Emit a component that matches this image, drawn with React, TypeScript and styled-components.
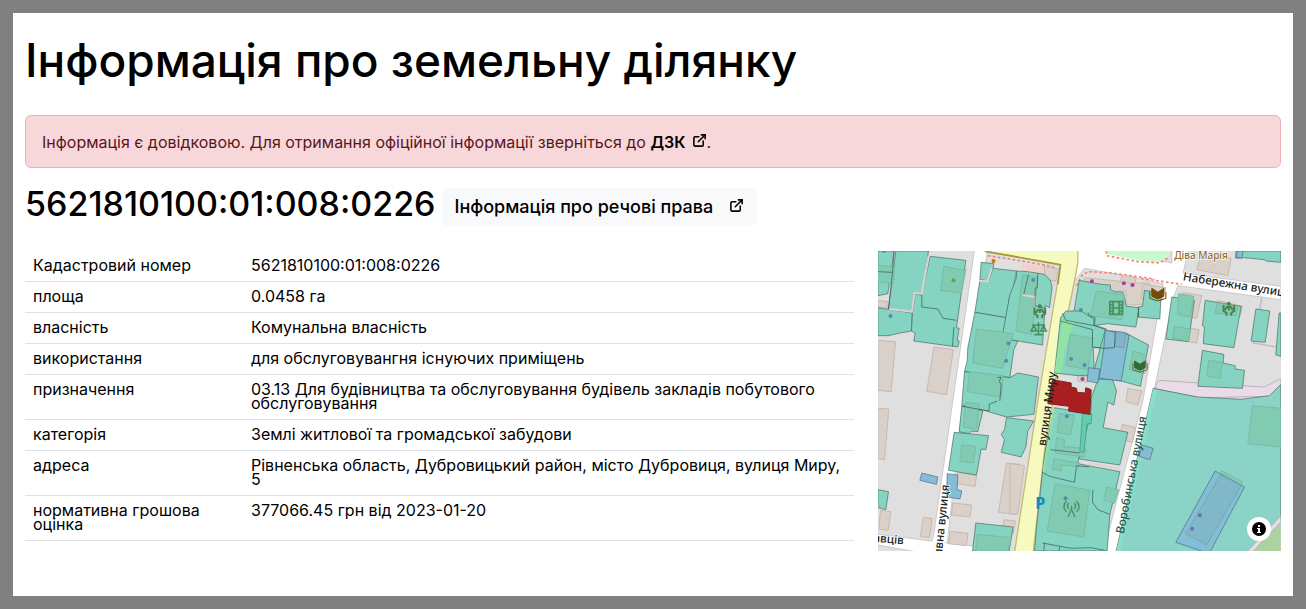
import React from "react";
import styled, { createGlobalStyle } from "styled-components";
import { FiExternalLink } from "react-icons/fi";

const GlobalStyle = createGlobalStyle`
  *, *::before, *::after { box-sizing: border-box; }
  body {
    margin: 0;
    background: #808080;
    color: #000;
    font-family: Inter, "Noto Sans", sans-serif;
    font-size: 16px;
    line-height: 24px;
  }
`;

const Page = styled.main`
  margin: 13px;
  padding: 22px 12px 45px;
  background: #fff;
`;

const Title = styled.h1`
  margin: 0 0 30px;
  font-size: 46px;
  font-weight: 500;
  line-height: 50px;
`;

const Alert = styled.p`
  margin: 0 0 16px;
  padding: 14px 16px 13px;
  border: 1px solid #f1aeb5;
  border-radius: 6px;
  background: #f8d7da;
  color: #58151c;
  line-height: 24px;
`;

const AlertLink = styled.a`
  color: #000;
  font-weight: 600;
  text-decoration: none;
  svg { margin-left: 2px; }
`;

const Heading = styled.div`
  display: flex;
  align-items: flex-start;
  gap: 6px;
  margin-bottom: 25px;
`;

const ParcelNumber = styled.h2`
  margin: 0;
  font-size: 34px;
  font-weight: 500;
  line-height: 40px;
`;

const RightsLink = styled.a`
  display: inline-flex;
  align-items: center;
  gap: 16px;
  margin-top: 4px;
  padding: 7px 13px;
  border-radius: 6px;
  background: #f8f9fa;
  color: #000;
  font-size: 18px;
  font-weight: 500;
  text-decoration: none;
  svg { margin-bottom: 4px; }
`;

const Columns = styled.div`
  display: grid;
  grid-template-columns: repeat(12, 1fr);
  column-gap: 24px;
`;

const Details = styled.table`
  grid-column: span 8;
  align-self: start;
  width: 100%;
  border-collapse: separate;
  border-spacing: 0;
  table-layout: fixed;
  line-height: 14px;
`;

const Label = styled.th`
  width: 218px;
  padding: 7px 8px 9px;
  border-bottom: 1px solid #dee2e6;
  font-weight: 400;
  text-align: left;
  vertical-align: top;
`;

const Value = styled.td`
  padding: 7px 8px 9px;
  border-bottom: 1px solid #dee2e6;
  vertical-align: top;
`;

const MapPanel = styled.section`
  grid-column: span 4;
  position: relative;
  height: 300px;
  overflow: hidden;
  background: #e0dfdf;
`;

const MapDrawing = styled.svg`
  display: block;
  width: 100%;
  height: 100%;
  font-family: "Noto Sans", sans-serif;
`;

const InfoButton = styled.button`
  position: absolute;
  right: 10px;
  bottom: 10px;
  display: grid;
  place-items: center;
  width: 24px;
  height: 24px;
  padding: 0;
  border: 0;
  border-radius: 12px;
  background: #fff;
`;

const rows = [
  ["Кадастровий номер", "5621810100:01:008:0226"],
  ["площа", "0.0458 га"],
  ["власність", "Комунальна власність"],
  ["використання", "для обслуговувангня існуючих приміщень"],
  ["призначення", "03.13 Для будівництва та обслуговування будівель закладів побутового обслуговування"],
  ["категорія", "Землі житлової та громадської забудови"],
  ["адреса", "Рівненська область, Дубровицький район, місто Дубровиця, вулиця Миру, 5"],
  ["нормативна грошова оцінка", "377066.45 грн від 2023-01-20"],
];

const buildings = [
  "0,148 30,152 30,172 0,168",
  "0,268 53,272 40,422 0,418",
  "168,288 227,296 206,431 147,421",
  "0,472 33,474 20,626 0,622",
  "250,52 265,54 250,130 240,128",
  "8,778 39,782 31,838 3,834",
  "136,799 163,803 155,860 128,856",
  "240,664 296,674 292,706 238,698",
  "225,756 281,762 277,798 221,792",
  "216,841 270,847 266,884 212,878",
  "386,636 428,640 410,790 362,784",
  "378,806 413,810 405,850 374,846",
  "396,638 440,644 420,790 396,788",
  "620,80 780,96 816,96 812,160 744,162 744,120 690,122 620,100",
  "500,46 542,54 534,90 500,86",
  "795,100 864,110 850,150 790,142",
  "970,8 1060,22 1050,74 957,56",
  "914,124 972,134 956,202 900,190",
  "892,224 964,236 956,276 886,264",
  "1018,148 1094,166 1086,198 1012,184",
  "732,72 776,80 770,98 728,92",
  "702,240 746,246 738,290 694,286",
  "796,330 808,330 802,368 790,364",
  "750,412 792,420 780,462 744,452",
  "734,520 774,530 764,574 724,564",
  "700,710 722,716 708,758 696,754",
  "536,688 646,706 642,724 532,702",
  "600,374 632,378 628,394 600,390",
];

const parcels = [
  "0,0 49,0 30,128 0,134",
  "54,0 152,0 134,130 110,126 100,182 32,174",
  "0,170 103,186 101,240 66,246 32,254 0,254",
  "157,16 264,28 236,230 244,232 238,268 244,270 240,288 108,270 112,246 101,240 104,186 112,130 132,132",
  "310,34 348,38 340,90 306,86",
  "345,52 416,60 404,125 396,132 385,200 291,184 306,90 332,92",
  "291,184 385,200 374,262 420,270 408,296 396,380 260,362 268,330 270,290",
  "416,60 416,80 396,132 372,262 494,282 502,164 515,170 523,110 518,88 500,70 450,62",
  "260,362 396,380 420,366 482,378 468,490 386,498 318,478 252,462",
  "252,465 315,480 300,542 282,540 272,548 244,542",
  "229,544 272,548 332,554 324,596 310,594 296,672 212,658",
  "386,500 468,510 450,540 444,588 430,618 370,604 380,566 370,550 380,536",
  "294,816 406,828 394,900 284,900",
  "0,716 32,722 24,776 0,770",
  "604,88 670,100 698,102 698,116 710,122 736,124 746,166 784,170 774,228 690,218 646,224 586,196",
  "800,118 850,126 846,204 780,198 782,168 794,166",
  "564,180 610,180 648,204 648,222 686,234 680,290 646,290 650,372 600,374 530,366 548,200",
  "682,238 740,244 812,282 788,406 730,390 676,382 660,390 645,370",
  "660,384 704,386 716,420 708,462 690,454 676,530 750,544 726,642 605,624 616,524 640,480 640,440 652,408",
  "530,470 640,488 606,605 602,626 600,638 726,662 696,792 688,900 470,900 476,830 494,664 502,600",
  "882,138 950,148 932,272 864,264",
  "982,148 1090,166 1068,290 976,278 980,228 974,224",
  "1134,174 1176,180 1162,274 1120,270",
  "974,298 1038,310 1036,336 1072,344 1072,354 1100,358 1094,412 960,406",
  "1204,186 1209,186 1209,316 1194,312",
  "1074,0 1209,0 1209,34 1164,30 1160,26 1098,20 1074,22",
];

const innerBuildings = [
  "0,42 50,48 46,98 0,92",
  "198,46 262,58 250,126 188,118",
  "296,234 406,248 374,352 284,336",
  "276,362 376,374 370,438 268,422",
  "434,72 480,80 462,250 414,240",
  "656,120 740,132 732,206 638,194",
  "576,250 646,262 630,356 566,344",
  "766,300 800,310 792,364 754,356",
  "264,454 304,460 296,534 256,528",
  "252,582 294,586 286,636 246,630",
  "546,488 590,492 578,552 538,544",
  "536,560 560,566 558,586 626,594 620,618 532,606",
  "528,624 606,636 604,646 550,642 550,660 524,656",
  "532,698 636,718 618,858 508,840",
  "1018,156 1080,166 1074,194 1012,186",
  "992,328 1034,334 1026,382 988,376",
  "300,850 400,860 390,900 294,900",
  "686,708 722,716 710,756 678,748",
  "902,128 948,136 938,198 900,190",
  "890,226 938,234 932,270 884,262",
];

const bluePlots = [
  "682,238 754,252 730,390 664,382 678,292",
  "632,350 666,354 660,396 628,390",
  "132,666 180,678 176,700 126,688",
  "208,668 240,672 238,716 252,720 246,744 206,738",
  "792,582 826,592 816,626 784,616",
  "1012,660 1100,708 994,908 894,874",
  "1080,0 1096,0 1092,22 1074,18",
];

const boundaries = [
  "0,62 44,64 32,174",
  "49,0 44,64",
  "132,132 132,168 180,174 196,202 236,208",
  "228,228 224,286",
  "252,466 334,480 334,460 358,450",
  "358,380 370,378 364,392 370,400 366,450",
  "452,70 438,130",
  "480,66 478,110 472,112 472,164 500,172",
  "548,210 644,236 644,288 680,292",
  "554,186 564,208 650,224 684,236",
  "630,184 634,194 652,200 650,222",
  "712,242 710,290 678,292",
  "782,168 782,198",
  "518,596 606,606",
  "494,664 516,676 590,694 596,644 634,648",
  "645,716 644,754 660,776 696,790",
  "494,876 580,892 640,890 680,898",
  "546,888 544,900",
  "500,875 498,900",
];

const poiDots: [number, number, string][] = [
  [227, 88, "#6f9d45"], [38, 195, "#5e86ad"], [392, 277, "#5e86ad"], [385, 329, "#5e86ad"],
  [347, 30, "#c77400"], [466, 87, "#5e86ad"], [609, 177, "#5e86ad"], [580, 324, "#5e86ad"],
  [620, 342, "#5e86ad"], [642, 91, "#ac39ac"], [738, 97, "#ac39ac"], [764, 102, "#ac39ac"],
  [614, 384, "#ac39ac"], [567, 496, "#5e86ad"], [563, 742, "#5e86ad"], [966, 793, "#6a6cbc"],
  [943, 833, "#6a6cbc"], [18, 0, "#5e86ad"],
];

function Community({ x, y }: { x: number; y: number }) {
  return (
    <g transform={`translate(${x} ${y})`} fill="none" stroke="#4b8250" strokeWidth="6">
      <circle cx="0" cy="-16" r="6" fill="#4b8250" stroke="none" />
      <path d="M-16-12V6L-7 12V20M16-12V6L7 12V20M-12 4L-6-6H6L12 4M0-6V4" />
    </g>
  );
}

function CadastreMap() {
  return (
    <MapDrawing viewBox="0 0 1209 900" preserveAspectRatio="xMidYMid slice" role="img" aria-label="Мапа">
      <rect width="1209" height="900" fill="#e0dfdf" />
      <path d="M670 0H870L852 40L780 36L670 12Z" fill="#f2efe9" />
      <path d="M434 38L502 46L496 90L430 70Z" fill="#f0cfcf" />
      <g fill="#fff" stroke="#cbcaca" strokeWidth="3">
        <path d="M290-5H330L255 450L205 905H160L225 450Z" />
        <path d="M0 850L290 886L284 905H130L0 882Z" />
        <path d="M595-5H690L882 36V-5H932L916 66L1209 106V146L900 104L887 140L822 450L716 905H676L795 450L856 98L740 74L620 52L590 90Z" />
      </g>
      <path d="M686 0H876L868 22L846 32L812 34L690 10Z" fill="#c8facc" />
      <path d="M170 850L205 855L195 905H155Z" fill="#fff" />
      <path
        d="M320-5H600V34L590 90L540 330L526 450L500 600L466 905H410L480 450L548 42L396 14L320 0Z"
        fill="#f7fabf"
        stroke="#c3bd72"
        strokeWidth="4"
      />
      <path d="M324 2L396 14L548 41L540 100" fill="none" stroke="#a29a38" strokeWidth="5" />
      <g fill="none" stroke="#fa8072" strokeWidth="5" strokeDasharray="8 7">
        <path d="M330 14L420 28L522 46L536 56L528 100" />
        <path d="M596 104L612 74L630 62L700 66L830 84" />
        <path d="M686 0V14L780 32L846 36L872 20" />
        <path d="M790 82L912 100" />
      </g>
      <g fill="#d9d0c9" stroke="#c9b9ab" strokeWidth="3">
        {buildings.map((points) => <polygon key={points} points={points} />)}
      </g>
      <path d="M842 388L1060 402L1160 408L1209 383V402L1180 436L960 440L830 412Z" fill="#ebdbe8" stroke="#bdb3ba" strokeWidth="3" />
      <path d="M1152 140L1126 276L1209 290" fill="none" stroke="#bbb" strokeWidth="4" />
      <path d="M1209 800L1110 905H1209Z" fill="#aed1a0" />
      <g fill="#85d4c1" stroke="#45685f" strokeWidth="2">
        {parcels.map((points) => <polygon key={points} points={points} />)}
        <path d="M826 412L960 438L1090 445L1175 434L1209 400V804L1112 905H714Z" fill="#8ad3c6" />
      </g>
      <path d="M1209 795L1105 905H1122L1209 812Z" fill="#ebdbe8" stroke="#aaa" strokeWidth="2" />
      <path d="M826 414L838 417L728 900H716Z" fill="#89e0c8" />
      <path d="M554 206L590 212L560 300L552 366L530 364Z" fill="#91e3a5" />
      <path d="M526 474L532 474L500 664L494 660Z" fill="#91e3a5" />
      <g fill="#82cbb3" stroke="#79bba5" strokeWidth="3">
        {innerBuildings.map((points) => <polygon key={points} points={points} />)}
        <path d="M1124 464L1209 472V588L1110 578Z" />
        <path d="M1032 660L1094 692L1090 702L1026 670Z" />
      </g>
      <g fill="#85bdd4" stroke="#456b80" strokeWidth="2">
        {bluePlots.map((points) => <polygon key={points} points={points} />)}
      </g>
      <path d="M1028 672L1090 704L986 882L924 848Z" fill="#80b8c8" stroke="#74a9ba" strokeWidth="3" />
      <path d="M716 242L744 248L738 290L710 286Z" fill="#82b3c6" stroke="#789fb0" strokeWidth="3" />
      <path
        d="M152 16L132 128L110 126L102 182L34 174M306 90L330 91L342 50M434 132L472 138L472 164M634 636L726 654"
        fill="none"
        stroke="#e2d1d0"
        strokeWidth="6"
      />
      <g fill="none" stroke="#35544d" strokeWidth="2">
        {boundaries.map((points) => <polyline key={points} points={points} />)}
      </g>
      <path d="M614 488L642 490L640 518L628 518L618 604L606 602Z" fill="#60cfad" stroke="#4d8b78" strokeWidth="2" />
      <g fill="none" stroke="#4b8f61" strokeWidth="5">
        <path d="M696 152H734V190H696ZM706 152V190M724 152V190M706 171H724M696 162H706M696 171H706M696 181H706M724 162H734M724 171H734M724 181H734" />
        <path d="M482 214V250M470 251H496M464 222H502M468 223L460 240H476ZM497 223L489 240H505Z" />
        <path
          d="M581 778V764M571 798L581 774L591 798M573 774Q565 766 573 756M589 774Q597 766 589 756M566 782Q551 768 566 750M596 782Q611 768 596 750"
          strokeWidth="4"
        />
      </g>
      <Community x={486} y={182} />
      <Community x={1053} y={174} />
      <g fill="#734a08" stroke="#734a08" strokeWidth="3">
        <path d="M822 112L840 124L858 112V136L840 144L822 136Z" />
        <path d="M816 122V142L840 150L864 142V122" fill="none" />
        <path d="M770 330L786 340L802 330V350L786 358L770 350Z" fill="#306b35" stroke="#306b35" />
        <path d="M765 336V356L786 364L808 356V336" fill="none" stroke="#5b6a38" />
      </g>
      {poiDots.map(([x, y, color]) => <circle key={`${x}-${y}`} cx={x} cy={y} r="6" fill={color} />)}
      <path
        d="M524 386L580 396L580 408L596 412L598 424L622 426L624 410L640 416L636 490L572 480L574 466L510 458Z"
        fill="#a91f20"
        stroke="#7c2422"
        strokeWidth="3"
      />
      <g fontSize="35" fontWeight="500" fill="#222" stroke="#fff" strokeWidth="4" strokeLinejoin="round" paintOrder="stroke">
        <text x="889" y="25" fontSize="30" fill="#8f6c30">Діва Марія</text>
        <text transform="translate(914 88) rotate(9)">Набережна вулиця</text>
        <text transform="translate(504 586) rotate(-82)" stroke="none">вулиця Миру</text>
        <text transform="translate(738 850) rotate(-79)" stroke="none" fill="#2c544c">Воробинська вулиця</text>
        <text transform="translate(192 916) rotate(-84)">ивна вулиця</text>
        <text transform="translate(-14 872) rotate(5)">авців</text>
      </g>
      <text x="472" y="775" fontSize="48" fontWeight="700" fill="#1688c4">P</text>
    </MapDrawing>
  );
}

export default function App() {
  return (
    <>
      <GlobalStyle />
      <Page>
        <Title>Інформація про земельну ділянку</Title>
        <Alert>
          Інформація є довідковою. Для отримання офіційної інформації зверніться до{" "}
          <AlertLink href="#dzk">ДЗК <FiExternalLink size={15} strokeWidth={2.5} /></AlertLink>.
        </Alert>
        <Heading>
          <ParcelNumber>5621810100:01:008:0226</ParcelNumber>
          <RightsLink href="#rights">Інформація про речові права <FiExternalLink size={15} strokeWidth={2.5} /></RightsLink>
        </Heading>
        <Columns>
          <Details>
            <tbody>
              {rows.map(([label, value]) => (
                <tr key={label}>
                  <Label scope="row">{label}</Label>
                  <Value>{value}</Value>
                </tr>
              ))}
            </tbody>
          </Details>
          <MapPanel>
            <CadastreMap />
            <InfoButton type="button" aria-label="Про мапу">
              <svg width="14" height="14" viewBox="0 0 14 14" aria-hidden="true">
                <circle cx="7" cy="7" r="7" />
                <path d="M6 3h2v2H6zM5 6h3v4h1v1H5v-1h1V7H5z" fill="#fff" />
              </svg>
            </InfoButton>
          </MapPanel>
        </Columns>
      </Page>
    </>
  );
}
